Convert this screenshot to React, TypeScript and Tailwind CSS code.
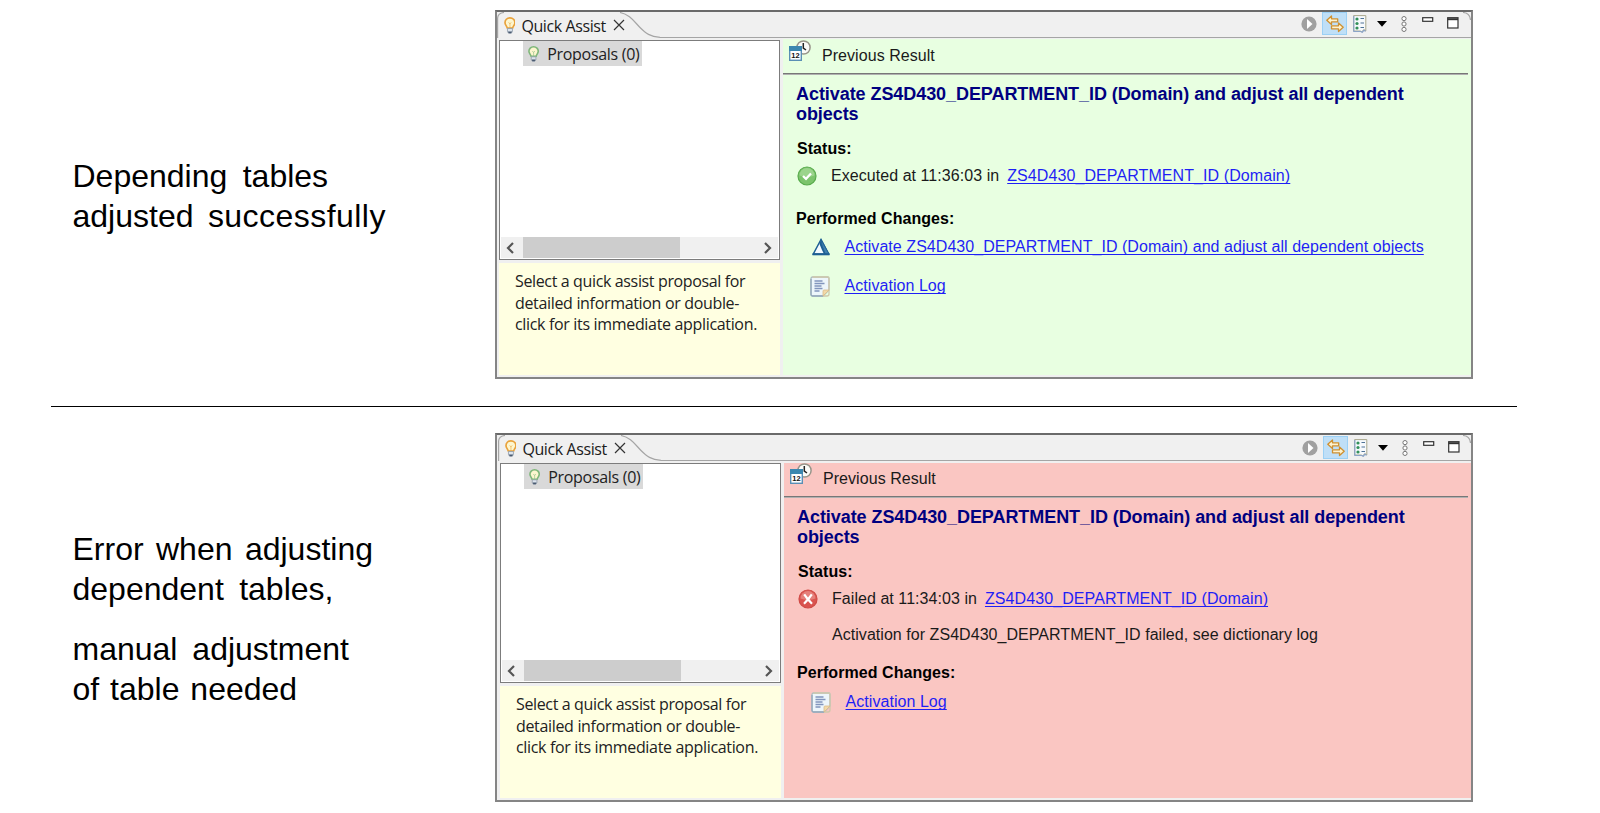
import React from "react";

type Kind = "success" | "error";

function Bulb({ color, size }: { color: string; size: number }) {
  return (
    <svg width={size * 0.7} height={size} viewBox="0 0 12 17" className="shrink-0">
      <path d="M6 .8C3 .8 1 2.900 1 5.600c0 2.100 1.700 3.300 2.300 5.400h5.400C9.300 8.900 11 7.700 11 5.600 11 2.900 9 .8 6 .8Z" fill="#fdf6cf" stroke={color} strokeWidth="1.700" />
      <path d="M6 10.500V7L4.700 5.300M6 7l1.300-1.700" stroke={color} strokeWidth=".6" fill="none" />
      <path d="M3.500 11.500h5v3L7.500 16.200h-3l-1-1.700Z" fill="#dde5ee" stroke="#8d99a6" strokeWidth=".8" />
      <path d="M3.800 14.500h4.400l-1 1.800H4.800Z" fill="#4a5a70" />
    </svg>
  );
}

function ResultIcon() {
  return (
    <svg width="23" height="22" viewBox="0 0 23 22" className="shrink-0">
      <circle cx="14.500" cy="7.500" r="6.600" fill="#fbfbf8" stroke="#98958a" strokeWidth="1.500" />
      <path d="M14.300 3v5l2.700 2" fill="none" stroke="#222" strokeWidth="1.500" />
      <rect x=".7" y="6.700" width="11.600" height="13.600" fill="#fff" stroke="#5a8fb5" strokeWidth="1.400" />
      <rect x="0" y="6" width="13" height="5" fill="#3b87b0" />
      <text x="6.500" y="18" textAnchor="middle" fontSize="7.500" fontWeight="bold" fontFamily="Liberation Sans, sans-serif" fill="#111">12</text>
    </svg>
  );
}

function StatusIcon({ kind }: { kind: Kind }) {
  const ok = kind === "success";
  return (
    <svg width="20" height="20" viewBox="0 0 20 20" className="shrink-0">
      <circle cx="10" cy="10" r="9" fill={ok ? "#7cc46c" : "#d9534f"} stroke={ok ? "#58ab4c" : "#d04a45"} strokeWidth="1.200" />
      <path d="M2.500 9.500a7.500 7.500 0 0 1 15 0c-4 1.800-11 1.800-15 0Z" fill={ok ? "#9bd48c" : "#e5807b"} />
      {ok ? (
        <path d="m6 10 3 2.800 5-5.300" fill="none" stroke="#fff" strokeWidth="2.300" />
      ) : (
        <path d="M6.200 5.300c2 3 5 6.500 7.800 9.400M13.800 5.300c-2 3-5 6.500-7.800 9.400" fill="none" stroke="#fff" strokeWidth="2.200" />
      )}
    </svg>
  );
}

function ActivateIcon() {
  return (
    <svg width="18" height="18" viewBox="0 0 18 18" className="shrink-0">
      <path d="M9 1.500 1.300 16h15.400Z" fill="#f3faff" stroke="#1d5f93" strokeWidth="1.500" />
      <path d="M9 1.500 10 8l3 8h4Z" fill="#3f7fae" stroke="#1d5f93" strokeWidth=".8" />
      <path d="M9 1 7.500 6 10 12l2 4h1.500L10 7Z" fill="#1d5f93" />
      <path d="M.5 16.300h17" stroke="#1d5f93" strokeWidth="2" />
    </svg>
  );
}

function LogIcon() {
  return (
    <svg width="20" height="21" viewBox="0 0 20 21" className="shrink-0">
      <path d="M2.500 1h15A1.500 1.500 0 0 1 19 2.500V14l-6 6H2.500A1.500 1.500 0 0 1 1 18.500v-16A1.500 1.500 0 0 1 2.500 1Z" fill="#edf6fb" stroke="#aebcc0" strokeWidth="1.300" />
      <path d="M1 3v15.500A1.500 1.500 0 0 0 2.500 20H13" fill="none" stroke="#94a9bd" strokeWidth="1.300" />
      <path d="M2.500 1h15A1.500 1.500 0 0 1 19 2.500V18q0 2-2 2h-4" fill="none" stroke="#cfc9ab" strokeWidth="1.300" />
      <path d="M13 20v-5q0-1 1-1h5Z" fill="#f3d9a8" stroke="#d9bd8a" strokeWidth=".8" />
      <path d="M4.500 5h8M4.500 7.500h10M4.500 10h7M4.500 12.500h8M4.500 15h5" stroke="#8195bd" strokeWidth="1.300" />
    </svg>
  );
}

function Toolbar() {
  return (
    <div className="flex h-[23px] items-center">
      <svg width="16" height="16" viewBox="0 0 16 16">
        <circle cx="8" cy="8" r="7.600" fill="#a0a0a0" />
        <path d="M6 3v10L11.500 8Z" fill="#fff" />
      </svg>
      <div className="ml-[5px] flex h-[23px] w-[25px] items-center justify-center border border-[#9bd0f5] bg-[#bfdff7]">
        <svg width="18" height="18" viewBox="0 0 18 18" fill="#fdf3d0" stroke="#cf9030" strokeWidth="1.300" strokeLinejoin="round">
          <path d="M.8 5.300 5.500 1v2.800h6.200v3H5.500v2.800Z" />
          <path d="M17.200 12.300 12.500 8v2.800H5.500v3h7v2.800Z" />
        </svg>
      </div>
      <svg width="14" height="18" viewBox="0 0 14 18" className="ml-[6px]">
        <path d="M.6.6h12.200V16l-2-1.500-2 2.500-1.500-1H.6Z" fill="#f6f9fc" stroke="#a9a78c" strokeWidth="1" />
        <path d="M.8 1v15.500h7l1.500.8 1.500-2 1.800 1" fill="none" stroke="#8aa4c8" strokeWidth="1.200" />
        <circle cx="4" cy="4" r="1.600" fill="#32905a" />
        <circle cx="4" cy="8.500" r="1.600" fill="#32905a" />
        <circle cx="4" cy="13" r="1.600" fill="#32905a" />
        <path d="M7.500 3.500h3.500M7.500 8h3.500M7.500 12.500h3.500" stroke="#4f7396" strokeWidth="1.200" />
      </svg>
      <svg width="10" height="6" viewBox="0 0 10 6" className="mt-px ml-[10px]">
        <path d="M0 0h10L5 5.700Z" fill="#000" />
      </svg>
      <svg width="6" height="16" viewBox="0 0 6 16" className="mt-px ml-[14px]" fill="#fff" stroke="#777" strokeWidth="1">
        <circle cx="3" cy="2.600" r="2.100" />
        <circle cx="3" cy="8" r="2.100" />
        <circle cx="3" cy="13.400" r="2.100" />
      </svg>
      <svg width="12" height="16" viewBox="0 0 12 16" className="mt-px ml-[15px]">
        <rect x=".7" y="1.700" width="10" height="3.600" fill="#fff" stroke="#333" strokeWidth="1.200" />
      </svg>
      <svg width="12" height="16" viewBox="0 0 12 16" className="mt-px ml-[13px]">
        <rect x=".7" y="1.700" width="10.300" height="10.300" fill="#fff" stroke="#333" strokeWidth="1.200" />
        <path d="M.7 3.200H11" stroke="#333" strokeWidth="2" />
      </svg>
    </div>
  );
}

function TabBar({ kind }: { kind: Kind }) {
  return (
    <div className="flex h-[26px] shrink-0">
      <div className="relative h-full w-[163px]">
        <svg width="163" height="26" viewBox="0 0 163 26" className="absolute inset-0" fill="none" stroke="#a5a5a5" strokeWidth="1.200">
          <path d="M.6 26V6Q1 1 7 .5" />
          <path d="M123 .5c10 2 14 9 20 15s10 9 20 9.800" />
        </svg>
        <div className="relative flex h-[26px] items-center pl-[6.500px]">
          <Bulb color="#e9a23b" size={17} />
          <span className="mt-px ml-[6px] w-[84px] font-['Open_Sans','Noto_Sans',sans-serif] text-[16px] leading-[26px] tracking-[-0.4px] whitespace-nowrap text-[#1b1b1b]">Quick Assist</span>
          <svg width="12" height="12" viewBox="0 0 12 12" className="ml-[8px]">
            <path d="m1 1 10 10M11 1 1 11" stroke="#333" strokeWidth="1.200" />
          </svg>
        </div>
      </div>
      <div className={"relative flex flex-1 justify-end border-b border-[#a5a5a5] " + (kind === "success" ? "pr-[12px]" : "pt-px pr-[11px]")}>
        <Toolbar />
        <svg width="8" height="8" viewBox="0 0 8 8" className="absolute top-0 right-0" fill="none" stroke="#a5a5a5" strokeWidth="1.200">
          <path d="M0 .5Q7 1 7.500 8" />
        </svg>
      </div>
    </div>
  );
}

function Chevron({ flip }: { flip?: boolean }) {
  return (
    <svg width="8" height="12" viewBox="0 0 8 12" className={flip ? "rotate-180" : ""}>
      <path d="M7 1 2 6l5 5" fill="none" stroke="#555" strokeWidth="2.200" />
    </svg>
  );
}

function LeftSide() {
  return (
    <div className="flex w-[281px] shrink-0 flex-col pt-[2px]">
      <div className="flex h-[220px] flex-col border border-[#7c7c7c] bg-white">
        <div className="ml-[23px] flex h-[25px] w-[119px] items-center bg-[#d9d9d9] pl-[5px]">
          <Bulb color="#7fb77a" size={16} />
          <span className="mt-px ml-[8px] font-['Open_Sans','Noto_Sans',sans-serif] text-[16px] leading-[25px] tracking-[-0.3px] whitespace-nowrap text-[#222]">Proposals (0)</span>
        </div>
        <div className="mx-px mt-auto mb-px flex h-[21px] items-center bg-[#f0f0f0]">
          <div className="flex w-[22px] justify-center pr-[4px]"><Chevron /></div>
          <div className="h-full w-[157px] bg-[#cdcdcd]" />
          <div className="mr-[6px] ml-auto"><Chevron flip /></div>
        </div>
      </div>
      <div className="mt-[3px] h-[112px] bg-[#ffffe1] pt-[8px] pl-[16px] font-['Open_Sans','Noto_Sans',sans-serif] text-[16px] leading-[21.500px] tracking-[-0.33px] whitespace-nowrap text-[#222]">
        <div className="tracking-[-0.36px]">Select a quick assist proposal for</div>
        <div>detailed information or double-</div>
        <div>click for its immediate application.</div>
      </div>
    </div>
  );
}

const link = "text-[#1f1ff5] underline decoration-[1px] [text-decoration-skip-ink:none]";

function Result({ kind }: { kind: Kind }) {
  const ok = kind === "success";
  return (
    <div className={"mb-px ml-[3px] flex w-[688px] flex-col text-[16px] leading-[20px] tracking-[0.055px] whitespace-nowrap text-[#1a1a1a] " + (ok ? "mt-px bg-[#e8ffe1] pt-px" : "mt-[2px] bg-[#fac6c2]")}>
      <div className="flex h-[33px] items-start pl-[6px]">
        <ResultIcon />
        <span className="mt-[6px] ml-[10px]">Previous Result</span>
      </div>
      <div className="mr-[3px] h-[2px] shrink-0 border-b border-[#b0b0b0] bg-[#777]" />
      <div className="mt-[9px] pl-[13px] text-[18px] leading-[20px] font-bold tracking-[-0.065px] text-[#000080]">
        <div>Activate ZS4D430_DEPARTMENT_ID (Domain) and adjust all dependent</div>
        <div>objects</div>
      </div>
      <div className="mt-[15px] pl-[14px] font-bold text-black">Status:</div>
      <div className="mt-[7px] flex h-[20px] items-center pl-[14px]">
        <StatusIcon kind={kind} />
        <span className="ml-[14px]">{ok ? "Executed at 11:36:03 in" : "Failed at 11:34:03 in"}</span>
        <span className={"ml-[8px] tracking-[0.090px] underline-offset-[2px] " + link}>ZS4D430_DEPARTMENT_ID (Domain)</span>
      </div>
      {!ok && <div className="mt-[16px] pl-[48px] tracking-[0.045px]">Activation for ZS4D430_DEPARTMENT_ID failed, see dictionary log</div>}
      <div className={"pl-[13px] font-bold text-black " + (ok ? "mt-[23px]" : "mt-[18px]")}>Performed Changes:</div>
      {ok && (
        <div className="mt-[8px] flex h-[20px] items-center pl-[29px]">
          <ActivateIcon />
          <span className={"ml-[14.500px] tracking-[0.050px] underline-offset-[2px] " + link}>Activate ZS4D430_DEPARTMENT_ID (Domain) and adjust all dependent objects</span>
        </div>
      )}
      <div className={"flex h-[20px] items-center pl-[27px] " + (ok ? "mt-[19px]" : "mt-[9px]")}>
        <LogIcon />
        <span className={"ml-[14.500px] underline-offset-[2px] " + link}>Activation Log</span>
      </div>
    </div>
  );
}

function Panel({ kind }: { kind: Kind }) {
  return (
    <div className={"flex h-[369px] w-[978px] shrink-0 flex-col border-2 border-[#858585] border-t-[#6a6a6a] bg-[#f0f0f0] " + (kind === "success" ? "" : "pl-px")}>
      <TabBar kind={kind} />
      <div className="flex h-[338px] pl-[2px]">
        <LeftSide />
        <Result kind={kind} />
      </div>
    </div>
  );
}

export default function App() {
  return (
    <main className="h-[813px] w-[1600px] overflow-hidden bg-white font-['Liberation_Sans',Arial,sans-serif]">
      <section className="flex pt-[10px]">
        <div className="w-[495px] pt-[146px] pl-[72.500px] text-[32px] leading-[40px] whitespace-nowrap text-black">
          <div className="[word-spacing:6.500px]">Depending tables</div>
          <div className="[word-spacing:5.500px]">adjusted <span className="tracking-[0.460px]">successfully</span></div>
        </div>
        <Panel kind="success" />
      </section>
      <div className="mt-[27px] ml-[51px] h-px w-[1466px] bg-black" />
      <section className="flex pt-[26px]">
        <div className="w-[495px] pt-[96px] pl-[72.500px] text-[32px] leading-[40px] whitespace-nowrap text-black">
          <div className="[word-spacing:3.500px]">Error when adjusting</div>
          <div className="[word-spacing:6.500px]">dependent tables,</div>
          <div className="mt-[20px] [word-spacing:6px]">manual adjustment</div>
          <div className="[word-spacing:2px]">of table needed</div>
        </div>
        <Panel kind="error" />
      </section>
    </main>
  );
}
